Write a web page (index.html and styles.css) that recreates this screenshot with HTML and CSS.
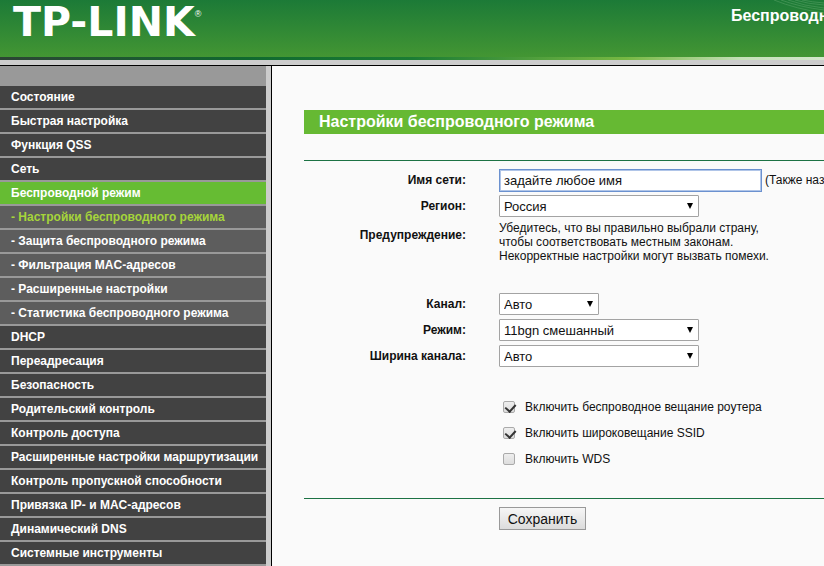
FILE: index.html
```
<!DOCTYPE html>
<html lang="ru">
  <head>
    <meta charset="utf-8">
    <title>TP-LINK</title>
    <link rel="stylesheet" href="styles.css">
  </head>
  <body>
    <header class="banner">
      <svg class="waves" width="50" height="14" viewBox="0 0 50 14">
        <path d="M0 0Q22 9 50 13M7 0Q26 7 50 10M14 0Q30 6 50 8M21 0Q34 4 50 5M28 0Q38 2 50 3" />
      </svg>
      <div class="logo">TP-LINK<span class="reg">®</span></div>
      <div class="model">Беспроводн</div>
    </header>
    <div class="strip"></div>

    <div class="page">
      <nav class="menu">
        <ul>
          <li><a href="#">Состояние</a></li>
          <li><a href="#">Быстрая настройка</a></li>
          <li><a href="#">Функция QSS</a></li>
          <li><a href="#">Сеть</a></li>
          <li><a href="#" class="active">Беспроводной режим</a></li>
          <li><a href="#" class="sub current">- Настройки беспроводного режима</a></li>
          <li><a href="#" class="sub">- Защита беспроводного режима</a></li>
          <li><a href="#" class="sub">- Фильтрация MAC-адресов</a></li>
          <li><a href="#" class="sub">- Расширенные настройки</a></li>
          <li><a href="#" class="sub">- Статистика беспроводного режима</a></li>
          <li><a href="#">DHCP</a></li>
          <li><a href="#">Переадресация</a></li>
          <li><a href="#">Безопасность</a></li>
          <li><a href="#">Родительский контроль</a></li>
          <li><a href="#">Контроль доступа</a></li>
          <li><a href="#">Расширенные настройки маршрутизации</a></li>
          <li><a href="#">Контроль пропускной способности</a></li>
          <li><a href="#">Привязка IP- и MAC-адресов</a></li>
          <li><a href="#">Динамический DNS</a></li>
          <li><a href="#">Системные инструменты</a></li>
        </ul>
      </nav>

      <main class="content">
        <h1>Настройки беспроводного режима</h1>
        <form>
          <div class="fields">
            <div class="row">
              <label class="name" for="ssid">Имя сети:</label>
              <input id="ssid" class="text" type="text" value="задайте любое имя">
              <span class="hint">(Также наз</span>
            </div>
            <div class="row">
              <label class="name" for="region">Регион:</label>
              <span class="select"><select id="region"><option>Россия</option></select></span>
            </div>
            <div class="row warning">
              <span class="name">Предупреждение:</span>
              <p>Убедитесь, что вы правильно выбрали страну,<br>чтобы соответствовать местным законам.<br>Некорректные настройки могут вызвать помехи.</p>
            </div>
            <div class="row">
              <label class="name" for="channel">Канал:</label>
              <span class="select short"><select id="channel"><option>Авто</option></select></span>
            </div>
            <div class="row">
              <label class="name" for="mode">Режим:</label>
              <span class="select"><select id="mode"><option>11bgn смешанный</option></select></span>
            </div>
            <div class="row">
              <label class="name" for="width">Ширина канала:</label>
              <span class="select"><select id="width"><option>Авто</option></select></span>
            </div>
            <div class="checks">
              <label><input type="checkbox" checked>Включить беспроводное вещание роутера</label>
              <label><input type="checkbox" checked>Включить широковещание SSID</label>
              <label><input type="checkbox">Включить WDS</label>
            </div>
          </div>
          <button type="button">Сохранить</button>
        </form>
      </main>
    </div>
  </body>
</html>
```

FILE: styles.css
```
* {
  box-sizing: border-box;
}

body {
  margin: 0;
  height: 100vh;
  display: flex;
  flex-direction: column;
  overflow: hidden;
  background-color: #fafafa;
  color: #111;
  font: 12px/14px "Liberation Sans", Arial, sans-serif;
}

.banner {
  position: relative;
  flex: none;
  display: flex;
  justify-content: space-between;
  height: 57px;
  padding-left: 13px;
  overflow: hidden;
  background: linear-gradient(#1c7a37, #439633);
  color: #fff;
}

.waves {
  position: absolute;
  top: 0;
  right: 0;
  fill: none;
  stroke: #4c9a5c;
  stroke-width: 0.7;
}

.logo {
  display: flex;
  font: bold 41px/44px "DejaVu Sans", sans-serif;
}

.reg {
  padding-top: 8px;
  font: 9px/12px "Liberation Sans", Arial, sans-serif;
}

.model {
  flex: none;
  width: 93px;
  white-space: nowrap;
  font-size: 16px;
  font-weight: bold;
  line-height: 32px;
}

.strip {
  flex: none;
  height: 9px;
  border-bottom: 1px solid #000;
  background: linear-gradient(90deg, #2c4434, #10692f 30%, #1b7c34 50%, #77b843 76%, #c5e0b8 90%, #d3e7cb) top / 100% 3px no-repeat #ccc;
}

.page {
  flex: 1;
  display: flex;
  min-height: 0;
}

.menu {
  flex: none;
  width: 272px;
  padding-top: 20px;
  overflow: hidden;
  border-right: 1px solid #000;
  background: linear-gradient(90deg, #999 266px, #ccc 266px);
}

.menu ul {
  margin: 0;
  padding: 0 5px 0 0;
  list-style: none;
}

.menu a {
  display: block;
  height: 22px;
  margin-bottom: 2px;
  padding-left: 11px;
  background-color: #424242;
  color: #fff;
  font-weight: bold;
  line-height: 22px;
  white-space: nowrap;
  text-decoration: none;
}

.menu .active {
  background-color: #66bc33;
}

.menu .sub {
  background-color: #5d5d5d;
}

.menu .current {
  color: #a6d53a;
}

.content {
  flex: 1;
  min-width: 0;
  padding: 44px 0 0 32px;
  overflow: hidden;
}

h1 {
  margin: 0 0 26px;
  padding-left: 15px;
  background-color: #66b933;
  color: #fff;
  font-size: 16px;
  line-height: 24px;
}

.fields {
  padding: 6px 0 26px;
  border-top: 1px solid #1c7244;
  border-bottom: 1px solid #1c7244;
}

.row {
  display: flex;
  align-items: center;
  height: 26px;
  white-space: nowrap;
}

.name {
  flex: none;
  width: 162px;
  margin-right: 33px;
  text-align: right;
  font-weight: bold;
}

.text {
  flex: none;
  width: 263px;
  height: 23px;
  padding: 1px 4px 0;
  border: 1px solid #6b91cf;
  outline: 1px solid #b0c5e8;
  outline-offset: -2px;
  background-color: #fff;
  color: #111;
  font: 13px "Liberation Sans", Arial, sans-serif;
}

.hint {
  margin-left: 3px;
}

.select {
  position: relative;
  width: 200px;
}

.short {
  width: 100px;
}

select {
  display: block;
  appearance: none;
  width: 100%;
  height: 22px;
  padding: 0 4px;
  border: 1px solid #a3a3a3;
  border-radius: 1px;
  background-color: #fff;
  color: #111;
  font: 13px "Liberation Sans", Arial, sans-serif;
}

.select::after {
  content: "";
  position: absolute;
  top: 8px;
  right: 6px;
  border: 3px solid transparent;
  border-top: 6px solid #000;
  border-bottom: 0;
  pointer-events: none;
}

.warning {
  height: 72px;
  align-items: flex-start;
  padding-top: 2px;
}

.warning .name {
  padding-top: 7px;
}

.warning p {
  margin: 0;
}

.checks {
  padding: 25px 0 0 199px;
}

.checks label {
  display: flex;
  align-items: center;
  height: 26px;
}

.checks input {
  appearance: none;
  width: 12px;
  height: 12px;
  margin: 0 10px 0 0;
  border: 1px solid #aaa;
  border-radius: 2px;
  background: linear-gradient(#eee, #ddd);
}

.checks input:checked::before {
  content: "";
  display: block;
  width: 5px;
  height: 8px;
  margin-left: 3px;
  border: solid #333;
  border-width: 0 2px 2px 0;
  transform: rotate(42deg);
}

button {
  display: block;
  width: 87px;
  height: 23px;
  margin: 8px 0 0 195px;
  padding: 0;
  border: 1px solid #999;
  background: linear-gradient(#f6f6f6, #dcdcdc);
  color: #111;
  font: 14px "Liberation Sans", Arial, sans-serif;
}
```
